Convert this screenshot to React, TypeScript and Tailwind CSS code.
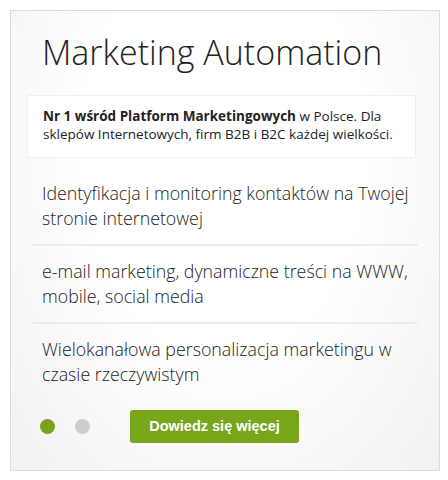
export default function App() {
  const items = [
    "Identyfikacja i monitoring kontaktów na Twojej stronie internetowej",
    "e-mail marketing, dynamiczne treści na WWW, mobile, social media",
    "Wielokanałowa personalizacja marketingu w czasie rzeczywistym",
  ];

  return (
    <div className="w-[448px] h-[480px] bg-white pt-[10px] pl-[10px] font-['Open_Sans',sans-serif]">
      <div className="w-[430px] h-[461px] border border-[#dcdcdc] bg-[radial-gradient(ellipse_at_50%_30%,#ffffff_45%,#f1f1f1_100%)] flex flex-col">
        <h1 className="pl-[31px] pt-[18px] text-[34px] leading-[46px] font-light text-[#222]">
          Marketing Automation
        </h1>

        <div className="mt-[20px] ml-[16px] w-[389px] h-[63px] bg-white border border-[#efefef] rounded-[2px] pl-[15px] pt-[11px] text-[13.5px] leading-[18px] text-[#222]">
          <b className="font-bold">Nr 1 wśród Platform Marketingowych</b> w Polsce. Dla sklepów
          Internetowych, firm B2B i B2C każdej wielkości.
        </div>

        <div className="mt-[10px] ml-[21px] w-[386px] flex flex-col">
          {items.map((t, i) => (
            <div
              key={i}
              className={
                "pl-[10px] pr-[4px] py-[13px] text-[17.8px] leading-[25px] font-light text-[#222] " +
                (i < items.length - 1 ? "border-b-2 border-[#ececec]" : "")
              }
            >
              {t}
            </div>
          ))}
        </div>

        <div className="mt-[10px] pl-[29px] flex items-center">
          <span className="w-[15px] h-[15px] rounded-full bg-[#76a31a]" />
          <span className="ml-[20px] w-[15px] h-[15px] rounded-full bg-[#cccccc]" />
          <button className="ml-[40px] w-[169px] h-[33px] rounded-[3px] bg-[#78a61b] text-white text-[14.5px] font-bold font-['Liberation_Sans',Arial,sans-serif]">
            Dowiedz się więcej
          </button>
        </div>
      </div>
    </div>
  );
}
